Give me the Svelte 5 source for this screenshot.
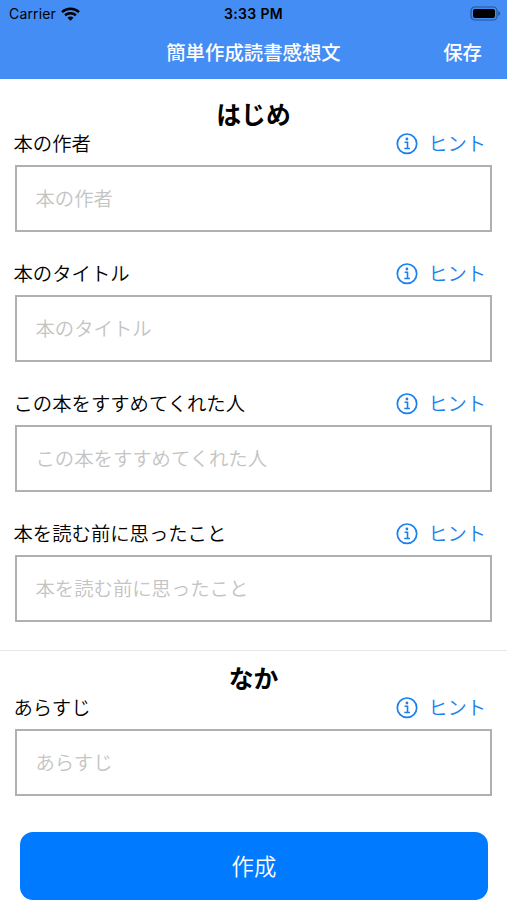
<script lang="ts">
  type Field = { id: string; label: string };
  type Section = { title: string; fields: Field[] };

  const sections: Section[] = [
    {
      title: 'はじめ',
      fields: [
        { id: 'author', label: '本の作者' },
        { id: 'title', label: '本のタイトル' },
        { id: 'recommender', label: 'この本をすすめてくれた人' },
        { id: 'before', label: '本を読む前に思ったこと' }
      ]
    },
    {
      title: 'なか',
      fields: [{ id: 'summary', label: 'あらすじ' }]
    }
  ];

  let values: Record<string, string> = $state({
    author: '',
    title: '',
    recommender: '',
    before: '',
    summary: ''
  });
</script>

<div class="screen">
  <header>
    <div class="status">
      <div class="carrier">
        <span>Carrier</span>
        <svg width="19" height="14" viewBox="0 0 19 14">
          <g fill="none" stroke="#000" stroke-width="2.5">
            <path d="M1 5.2C5.8 0.7 13.2 0.7 18 5.2" />
            <path d="M4.1 8.3C7.2 5.5 11.8 5.5 14.9 8.3" />
          </g>
          <path d="M6.5 10.7C8.2 9.2 10.8 9.2 12.5 10.7L9.5 13.7Z" />
        </svg>
      </div>
      <span class="time">3:33 PM</span>
      <svg class="battery" width="31" height="15" viewBox="0 0 31 15">
        <rect x="1" y="1" width="26" height="13" rx="3.8" fill="none" stroke="#000" stroke-opacity="0.4" stroke-width="1.2" />
        <rect x="3" y="3" width="22" height="9" rx="2" />
        <path d="M28.3 5.2C30.6 6 30.6 9 28.3 9.8Z" fill-opacity="0.45" />
      </svg>
    </div>
    <nav>
      <h1>簡単作成読書感想文</h1>
      <button class="save">保存</button>
    </nav>
  </header>

  <main>
    {#each sections as section}
      <section>
        <h2>{section.title}</h2>
        {#each section.fields as field (field.id)}
          <div class="field">
            <div class="row">
              <label for={field.id}>{field.label}</label>
              <button class="hint">
                <svg width="22" height="22" viewBox="0 0 22 22">
                  <circle cx="11" cy="10.7" r="9.7" fill="none" stroke="currentColor" stroke-width="1.7" />
                  <circle cx="10.9" cy="6" r="1.4" fill="currentColor" />
                  <path d="M8.6 9.3H11.5V15.5M8.3 15.5H14" fill="none" stroke="currentColor" stroke-width="1.6" />
                </svg>
                <span>ヒント</span>
              </button>
            </div>
            <input id={field.id} type="text" placeholder={field.label} bind:value={values[field.id]} />
          </div>
        {/each}
      </section>
    {/each}
  </main>

  <footer>
    <button class="create">作成</button>
  </footer>
</div>

<style>
  :global(body) {
    margin: 0;
    background: #fff;
  }
  .screen {
    display: flex;
    flex-direction: column;
    width: 507px;
    height: 900px;
    overflow: hidden;
    background: #fff;
    color: #000;
    font-family: Inter, 'Noto Sans CJK JP', sans-serif;
  }
  button {
    padding: 0;
    border: none;
    background: none;
    font-family: inherit;
  }
  header {
    flex: none;
    height: 79px;
    background: #448df5;
  }
  .status {
    display: grid;
    grid-template-columns: 1fr auto 1fr;
    align-items: center;
    height: 27px;
    padding: 0 6px 0 9px;
    font-size: 14px;
  }
  .carrier {
    display: flex;
    align-items: center;
    gap: 5px;
    letter-spacing: 0.15px;
  }
  .time {
    margin-right: 3px;
    font-weight: 600;
    letter-spacing: 0.35px;
  }
  .battery {
    justify-self: end;
  }
  nav {
    display: grid;
    grid-template-columns: 1fr auto 1fr;
    align-items: center;
    height: 52px;
    padding: 0 25px;
    color: #fff;
  }
  h1 {
    grid-column: 2;
    margin: 0;
    font-size: 19.4px;
    line-height: 30px;
    font-weight: 500;
  }
  .save {
    justify-self: end;
    color: #fff;
    font-size: 19.4px;
    line-height: 30px;
    font-weight: 500;
  }
  section {
    padding: 22px 15px 0;
  }
  section + section {
    padding-top: 14px;
    border-top: 1px solid #e6e6e6;
  }
  h2 {
    margin: 0;
    font-size: 24.8px;
    line-height: 28px;
    font-weight: 700;
    text-align: center;
  }
  .field {
    padding-bottom: 27px;
  }
  section:first-child .field:last-child {
    padding-bottom: 28px;
  }
  .row {
    display: flex;
    justify-content: space-between;
    align-items: center;
    height: 30px;
    margin: 0 6px 6px -1.5px;
    font-size: 19.35px;
    line-height: 30px;
  }
  label {
    font-weight: 350;
  }
  .hint {
    display: flex;
    align-items: center;
    gap: 10px;
    color: #1a80ee;
    font-size: 19.3px;
    line-height: 30px;
    font-weight: 350;
  }
  input {
    display: block;
    box-sizing: border-box;
    width: 100%;
    height: 67px;
    padding: 0 18.5px;
    border: 2px solid #b0b0b0;
    border-radius: 0;
    background: #fff;
    color: #000;
    font-family: inherit;
    font-size: 19.35px;
    font-weight: 350;
    outline: none;
  }
  input::placeholder {
    color: #c4c4c4;
    opacity: 1;
  }
  footer {
    flex: none;
    margin-top: auto;
    padding: 0 19px 0 20px;
  }
  .create {
    display: block;
    width: 100%;
    height: 68px;
    padding-bottom: 2px;
    border-radius: 13px;
    background: #007aff;
    color: #fff;
    font-size: 22.4px;
    font-weight: 350;
  }
</style>
